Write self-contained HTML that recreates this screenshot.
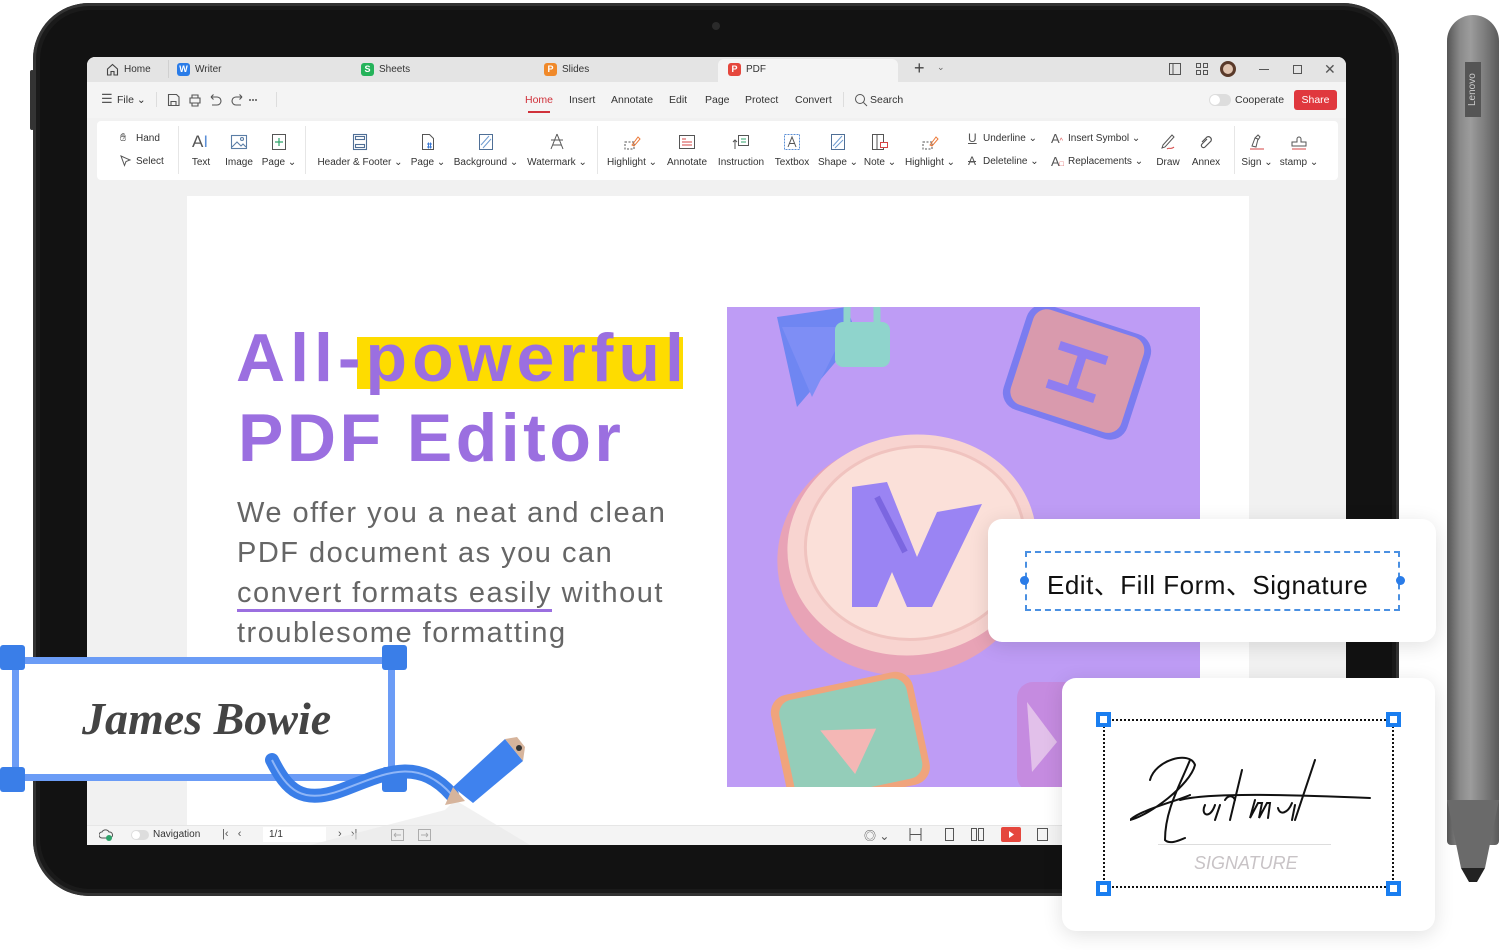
<!DOCTYPE html>
<html><head><meta charset="utf-8"><style>
*{margin:0;padding:0;box-sizing:border-box}
body{width:1500px;height:950px;background:#fff;position:relative;overflow:hidden;font-family:"Liberation Sans","Noto Sans CJK SC",sans-serif}
.abs{position:absolute}
.t{position:absolute;font-size:10px;color:#333;white-space:nowrap}
.lab{position:absolute;font-size:10px;color:#333;white-space:nowrap;transform:translateX(-50%);top:157px}
.ic{position:absolute;top:133px;width:18px;height:18px;transform:translateX(-50%)}
.m{position:absolute;top:94px;font-size:10.5px;color:#333}
</style></head><body>

<!-- tablet -->
<div class="abs" style="left:33px;top:3px;width:1366px;height:893px;border-radius:56px;background:#1a1a1a;box-shadow:inset 0 0 0 3px #333"></div>
<div class="abs" style="left:40px;top:10px;width:1352px;height:879px;border-radius:50px;background:#121212"></div>
<div class="abs" style="left:712px;top:22px;width:8px;height:8px;border-radius:50%;background:#2a2a2a"></div>
<div class="abs" style="left:30px;top:70px;width:4px;height:60px;background:#333;border-radius:2px"></div>

<!-- screen -->
<div class="abs" style="left:87px;top:57px;width:1259px;height:788px;background:#f1f1f1;border-radius:8px 8px 0 0;overflow:hidden">
  <div class="abs" style="left:0;top:0;width:1259px;height:25px;background:#e4e4e4"></div>
  <div class="abs" style="left:631px;top:2px;width:180px;height:23px;background:#f4f4f4;border-radius:6px 6px 0 0"></div>
  <div class="abs" style="left:0;top:25px;width:1259px;height:36px;background:#f4f4f4"></div>
  <div class="abs" style="left:10px;top:64px;width:1241px;height:59px;background:#fff;border-radius:4px"></div>
  <div class="abs" style="left:100px;top:139px;width:1062px;height:640px;background:#fff"></div>
  <div class="abs" style="left:0;top:768px;width:1259px;height:20px;background:#f4f4f4;border-top:1px solid #e6e6e6"></div>
</div>

<!-- tabs -->
<svg class="abs" style="left:106px;top:63px" width="13" height="13" viewBox="0 0 13 13"><path d="M1.5 6 6.5 1.5 11.5 6V12H8V8.5H5V12H1.5Z" fill="none" stroke="#444" stroke-width="1.1"/></svg>
<div class="t" style="left:124px;top:64px">Home</div>
<div class="abs" style="left:168px;top:60px;width:1px;height:18px;background:#d0d0d0"></div>
<div class="abs" style="left:177px;top:63px;width:13px;height:13px;background:#2a7ce8;border-radius:3px;color:#fff;font-size:9px;font-weight:bold;text-align:center;line-height:13px">W</div>
<div class="t" style="left:195px;top:64px">Writer</div>
<div class="abs" style="left:361px;top:63px;width:13px;height:13px;background:#25b35a;border-radius:3px;color:#fff;font-size:9px;font-weight:bold;text-align:center;line-height:13px">S</div>
<div class="t" style="left:379px;top:64px">Sheets</div>
<div class="abs" style="left:544px;top:63px;width:13px;height:13px;background:#f0892a;border-radius:3px;color:#fff;font-size:9px;font-weight:bold;text-align:center;line-height:13px">P</div>
<div class="t" style="left:562px;top:64px">Slides</div>
<div class="abs" style="left:728px;top:63px;width:13px;height:13px;background:#e5473d;border-radius:3px;color:#fff;font-size:9px;font-weight:bold;text-align:center;line-height:13px">P</div>
<div class="t" style="left:746px;top:64px">PDF</div>
<div class="t" style="left:914px;top:58px;font-size:18px;color:#444">+</div>
<div class="t" style="left:937px;top:62px;font-size:9px;color:#666">⌄</div>
<svg class="abs" style="left:1168px;top:62px" width="14" height="14"><rect x="1.5" y="1.5" width="11" height="11" fill="none" stroke="#555"/><line x1="5" y1="2" x2="5" y2="12" stroke="#555"/></svg>
<svg class="abs" style="left:1195px;top:62px" width="14" height="14"><g fill="none" stroke="#555"><rect x="1.5" y="1.5" width="4" height="4"/><rect x="8.5" y="1.5" width="4" height="4"/><rect x="1.5" y="8.5" width="4" height="4"/><rect x="8.5" y="8.5" width="4" height="4"/></g></svg>
<div class="abs" style="left:1220px;top:61px;width:16px;height:16px;border-radius:50%;background:#e0c4b0;border:3px solid #5a3a2a"></div>
<div class="abs" style="left:1259px;top:69px;width:10px;height:1px;background:#555"></div>
<div class="abs" style="left:1293px;top:65px;width:9px;height:9px;border:1px solid #555"></div>
<div class="t" style="left:1324px;top:61px;font-size:14px;color:#555">✕</div>

<!-- menu row -->
<div class="m" style="left:101px;font-size:13px;top:91px;color:#555">☰</div>
<div class="m" style="left:117px">File ⌄</div>
<div class="abs" style="left:156px;top:92px;width:1px;height:15px;background:#ddd"></div>
<svg class="abs" style="left:167px;top:93px" width="90" height="14"><g fill="none" stroke="#555" stroke-width="1.1"><path d="M1.5 1.5h8l2.5 2.5v8.5h-10.5z M4 12.5v-4h5v4"/><path d="M23 5h10v5h-10z M25 5V2h6v3 M25 10v3h6v-3"/><path d="M44 4h6a4 4 0 010 8h-5 M44 4l2.5-2.5 M44 4l2.5 2.5"/><path d="M75 4h-6a4 4 0 000 8h5 M75 4l-2.5-2.5 M75 4l-2.5 2.5"/></g><g fill="#555"><circle cx="86" cy="7" r="1"/><circle cx="89" cy="7" r="1"/><circle cx="83" cy="7" r="1"/></g></svg>
<div class="abs" style="left:276px;top:92px;width:1px;height:15px;background:#ddd"></div>
<div class="m" style="left:525px;color:#d0313a">Home</div>
<div class="abs" style="left:528px;top:111px;width:22px;height:2px;background:#d0313a"></div>
<div class="m" style="left:569px">Insert</div>
<div class="m" style="left:611px">Annotate</div>
<div class="m" style="left:669px">Edit</div>
<div class="m" style="left:705px">Page</div>
<div class="m" style="left:745px">Protect</div>
<div class="m" style="left:795px">Convert</div>
<div class="abs" style="left:843px;top:92px;width:1px;height:15px;background:#ddd"></div>
<svg class="abs" style="left:854px;top:93px" width="14" height="14"><circle cx="6" cy="6" r="4.5" fill="none" stroke="#555"/><line x1="9.5" y1="9.5" x2="13" y2="13" stroke="#555"/></svg>
<div class="m" style="left:870px">Search</div>
<div class="abs" style="left:1209px;top:94px;width:22px;height:12px;border-radius:6px;background:#ddd"></div>
<div class="abs" style="left:1210px;top:95px;width:10px;height:10px;border-radius:50%;background:#fff"></div>
<div class="m" style="left:1235px">Cooperate</div>
<div class="abs" style="left:1294px;top:90px;width:43px;height:20px;background:#e0383e;border-radius:3px;color:#fff;font-size:10.5px;text-align:center;line-height:20px">Share</div>

<!-- ribbon -->
<div class="t" style="left:120px;top:132px;font-size:11px">✋︎</div>
<div class="t" style="left:136px;top:133px">Hand</div>
<svg class="abs" style="left:120px;top:155px" width="12" height="12"><path d="M1 1l9 4-4 1.5L4.5 10.5z" fill="none" stroke="#555"/></svg>
<div class="t" style="left:136px;top:156px">Select</div>
<div class="abs" style="left:178px;top:126px;width:1px;height:48px;background:#e6e6e6"></div>
<div class="abs" style="left:305px;top:126px;width:1px;height:48px;background:#e6e6e6"></div>
<div class="abs" style="left:597px;top:126px;width:1px;height:48px;background:#e6e6e6"></div>
<div class="abs" style="left:1234px;top:126px;width:1px;height:48px;background:#e6e6e6"></div>

<div class="t" style="left:192px;top:132px;font-size:17px;color:#555">A<span style="color:#5b8fd6">I</span></div>
<svg class="ic" style="left:239px" viewBox="0 0 18 18"><g fill="none" stroke="#5b7ea6" stroke-width="1.1"><rect x="1.5" y="2.5" width="15" height="13"/><path d="M2 14l5-5 4 4 2-2 3 3"/><circle cx="12" cy="6" r="1.5"/></g></svg>
<svg class="ic" style="left:279px" viewBox="0 0 18 18"><rect x="2.5" y="1.5" width="13" height="15" fill="none" stroke="#555"/><path d="M9 5v8M5 9h8" stroke="#2fa36b" stroke-width="1.2"/></svg>
<svg class="ic" style="left:360px" viewBox="0 0 18 18"><g fill="none" stroke="#4f6f96" stroke-width="1.1"><rect x="2.5" y="1.5" width="13" height="15"/><rect x="4.5" y="3.5" width="9" height="3"/><rect x="4.5" y="11.5" width="9" height="3"/></g></svg>
<svg class="ic" style="left:428px" viewBox="0 0 18 18"><path d="M3.5 1.5h7l4 4v11h-11z" fill="none" stroke="#555"/><path d="M8 11h5M8 14h5M9.5 9.5v6M11.5 9.5v6" stroke="#3a78d4"/></svg>
<svg class="ic" style="left:486px" viewBox="0 0 18 18"><rect x="2.5" y="1.5" width="13" height="15" fill="none" stroke="#4f6f96"/><path d="M4 12l8-9M6 15l8-9" stroke="#6e9bd0"/></svg>
<svg class="ic" style="left:557px" viewBox="0 0 18 18"><path d="M9 1L3 16M9 1l6 15M3 7h12M5 12h8" fill="none" stroke="#555"/></svg>
<svg class="ic" style="left:632px" viewBox="0 0 18 18"><rect x="2" y="9" width="9" height="7" fill="none" stroke="#555" stroke-dasharray="2 1.5"/><path d="M9 12l6-8 2 2-6 7z" fill="none" stroke="#ec7a3a"/></svg>
<svg class="ic" style="left:687px" viewBox="0 0 18 18"><rect x="1.5" y="2.5" width="15" height="13" fill="none" stroke="#555"/><path d="M4 6h4M4 9h10M4 12h10" stroke="#d64545"/></svg>
<svg class="ic" style="left:741px" viewBox="0 0 18 18"><rect x="6.5" y="2.5" width="10" height="10" fill="none" stroke="#555"/><path d="M9 6h5M9 9h5" stroke="#2fa36b"/><path d="M3 16V7M1 9l2-2 2 2" fill="none" stroke="#555"/></svg>
<svg class="ic" style="left:792px" viewBox="0 0 18 18"><rect x="1.5" y="1.5" width="15" height="15" fill="none" stroke="#5b8fd6" stroke-dasharray="2 1"/><path d="M5 14L9 4l4 10M6.5 10.5h5" fill="none" stroke="#555"/></svg>
<svg class="ic" style="left:838px" viewBox="0 0 18 18"><rect x="2.5" y="1.5" width="13" height="15" fill="none" stroke="#4f6f96"/><path d="M4 13l9-10M6 15l8-8" stroke="#6e9bd0"/></svg>
<svg class="ic" style="left:880px" viewBox="0 0 18 18"><rect x="1.5" y="1.5" width="11" height="15" fill="none" stroke="#555"/><line x1="6" y1="2" x2="6" y2="16" stroke="#555"/><rect x="9.5" y="9.5" width="7" height="5" fill="#fff" stroke="#d64545"/></svg>
<svg class="ic" style="left:930px" viewBox="0 0 18 18"><rect x="2" y="9" width="9" height="7" fill="none" stroke="#555" stroke-dasharray="2 1.5"/><path d="M9 12l6-8 2 2-6 7z" fill="none" stroke="#ec7a3a"/></svg>
<div class="t" style="left:968px;top:131px;font-size:12px;text-decoration:underline;color:#555">U</div>
<div class="t" style="left:983px;top:133px">Underline ⌄</div>
<div class="t" style="left:968px;top:154px;font-size:12px;text-decoration:line-through;color:#555">A</div>
<div class="t" style="left:983px;top:156px">Deleteline ⌄</div>
<div class="t" style="left:1051px;top:131px;font-size:13px;color:#555">A<span style="font-size:7px;color:#d64545">^</span></div>
<div class="t" style="left:1068px;top:133px">Insert Symbol ⌄</div>
<div class="t" style="left:1051px;top:154px;font-size:13px;color:#555">A<span style="font-size:7px;color:#d64545">□</span></div>
<div class="t" style="left:1068px;top:156px">Replacements ⌄</div>
<svg class="ic" style="left:1168px" viewBox="0 0 18 18"><path d="M4 12L13 2l2 2-9 10-3 1z" fill="none" stroke="#555"/><path d="M8 16c2-2 4 1 7-2" fill="none" stroke="#d64545"/></svg>
<svg class="ic" style="left:1206px" viewBox="0 0 18 18"><path d="M5 9l5-5a3 3 0 014 4l-6 6a2 2 0 01-3-3l5-5" fill="none" stroke="#555" stroke-width="1.2"/></svg>
<svg class="ic" style="left:1257px" viewBox="0 0 18 18"><path d="M4 13l3-8 3 1-2 8zM7 5l3-3 2 2-2 3" fill="none" stroke="#555"/><line x1="2" y1="16" x2="16" y2="16" stroke="#d64545"/></svg>
<svg class="ic" style="left:1299px" viewBox="0 0 18 18"><path d="M7 9V6a2 2 0 114 0v3h5v4H2V9z" fill="none" stroke="#555"/><line x1="2" y1="16" x2="16" y2="16" stroke="#d64545"/></svg>
<div class="lab" style="left:201px">Text</div>
<div class="lab" style="left:239px">Image</div>
<div class="lab" style="left:279px">Page ⌄</div>
<div class="lab" style="left:360px">Header &amp; Footer ⌄</div>
<div class="lab" style="left:428px">Page ⌄</div>
<div class="lab" style="left:486px">Background ⌄</div>
<div class="lab" style="left:557px">Watermark ⌄</div>
<div class="lab" style="left:632px">Highlight ⌄</div>
<div class="lab" style="left:687px">Annotate</div>
<div class="lab" style="left:741px">Instruction</div>
<div class="lab" style="left:792px">Textbox</div>
<div class="lab" style="left:838px">Shape ⌄</div>
<div class="lab" style="left:880px">Note ⌄</div>
<div class="lab" style="left:930px">Highlight ⌄</div>
<div class="lab" style="left:1168px">Draw</div>
<div class="lab" style="left:1206px">Annex</div>
<div class="lab" style="left:1257px">Sign ⌄</div>
<div class="lab" style="left:1299px">stamp ⌄</div>

<!-- page content -->
<div class="abs" style="left:357px;top:337px;width:326px;height:52px;background:#fedc00"></div>
<div class="abs" style="left:236px;top:318px;font-size:68px;font-weight:bold;color:#9b6fe0;letter-spacing:5px;line-height:80px;white-space:nowrap">All-powerful</div>
<div class="abs" style="left:238px;top:398px;font-size:68px;font-weight:bold;color:#9b6fe0;letter-spacing:3.5px;line-height:80px;white-space:nowrap">PDF Editor</div>
<div class="abs" style="left:237px;top:493px;font-size:29px;color:#666;line-height:40px;white-space:nowrap;letter-spacing:1.5px">We offer you a neat and clean<br>PDF document as you can<br><span style="border-bottom:3px solid #9b6fe0">convert formats easily</span> without<br>troublesome formatting</div>

<!-- image -->
<svg class="abs" style="left:727px;top:307px" width="473" height="480" viewBox="0 0 473 480">
<rect width="473" height="480" fill="#be9cf5"/>
<path d="M50 10l70-10 10 30-60 70z" fill="#6f86f2"/><path d="M55 20l30 70 35-70z" fill="#7e8ef5"/>
<rect x="108" y="15" width="55" height="45" rx="8" fill="#8fd4cc"/><path d="M120 15v-12a15 15 0 0130 0v12" fill="none" stroke="#8fd4cc" stroke-width="7"/>
<g transform="rotate(18 350 65)"><rect x="285" y="10" width="130" height="110" rx="18" fill="#7b7cf0"/><rect x="292" y="14" width="116" height="100" rx="14" fill="#d99aad"/><path d="M325 45h50M350 45v40M325 85h50" stroke="#8f7df0" stroke-width="9"/></g>
<ellipse cx="180" cy="250" rx="130" ry="118" fill="#e8a3b6" transform="rotate(-10 180 250)"/>
<ellipse cx="185" cy="238" rx="125" ry="110" fill="#f8d4d0" transform="rotate(-10 185 238)"/>
<ellipse cx="188" cy="236" rx="110" ry="96" fill="#fbe0d9" stroke="#f0c3bf" stroke-width="3" transform="rotate(-10 188 236)"/>
<path d="M125 180l35 -5 30 75 20-45 45-8 -50 103h-25l-15-35-15 35h-25z" fill="#9a84f3"/>
<path d="M150 190l28 55" stroke="#7b66e0" stroke-width="6"/>
<g transform="rotate(-12 110 430)"><rect x="50" y="378" width="145" height="115" rx="18" fill="#f0a47c"/><rect x="58" y="384" width="130" height="102" rx="14" fill="#94cdb9"/><path d="M95 420l55 10-30 40z" fill="#f4b7b5"/></g>
<rect x="290" y="375" width="80" height="110" rx="16" fill="#c58be0"/><path d="M300 395l30 40-25 30z" fill="#e2c0ea"/>
</svg>

<!-- status bar -->
<svg class="abs" style="left:99px;top:828px" width="14" height="14"><path d="M3 10a3 3 0 010-6 4 4 0 017 0 3 3 0 011 6z" fill="none" stroke="#555"/><circle cx="10" cy="10" r="3" fill="#2fa36b"/></svg>
<div class="abs" style="left:131px;top:830px;width:18px;height:10px;border-radius:5px;background:#ddd"></div>
<div class="abs" style="left:132px;top:831px;width:8px;height:8px;border-radius:50%;background:#fff"></div>
<div class="t" style="left:153px;top:829px">Navigation</div>
<div class="t" style="left:222px;top:828px;font-size:11px;color:#555">|‹ &nbsp; ‹</div>
<div class="abs" style="left:263px;top:827px;width:63px;height:15px;background:#fff"></div>
<div class="t" style="left:269px;top:829px">1/1</div>
<div class="t" style="left:338px;top:828px;font-size:11px;color:#555">› &nbsp; ›|</div>
<svg class="abs" style="left:390px;top:828px" width="45" height="14"><g fill="none" stroke="#555"><rect x="1.5" y="1.5" width="12" height="11"/><path d="M4 7h7M4 7l2-2M4 7l2 2"/><rect x="28.5" y="1.5" width="12" height="11"/><path d="M31 7h7M38 7l-2-2M38 7l-2 2"/></g></svg>
<div class="t" style="left:864px;top:827px;font-size:12px;color:#555">◎ ⌄</div>
<svg class="abs" style="left:908px;top:827px" width="140" height="15"><g fill="none" stroke="#555"><path d="M2 1v13M13 1v13M2 7.5h11"/><rect x="37.5" y="1.5" width="8" height="12"/><rect x="63.5" y="1.5" width="5" height="12"/><rect x="70.5" y="1.5" width="5" height="12"/><rect x="129.5" y="1.5" width="10" height="12"/></g><rect x="93" y="0" width="20" height="15" rx="2" fill="#e5473d"/><path d="M101 4l5 3.5-5 3.5z" fill="#fff"/></svg>

<!-- James Bowie box -->
<div class="abs" style="left:12px;top:657px;width:383px;height:124px;background:#fff;border:7px solid #6b9cf6"></div>
<div class="abs" style="left:0;top:645px;width:25px;height:25px;background:#3a7ee8;border-radius:3px"></div>
<div class="abs" style="left:382px;top:645px;width:25px;height:25px;background:#3a7ee8;border-radius:3px"></div>
<div class="abs" style="left:0;top:767px;width:25px;height:25px;background:#3a7ee8;border-radius:3px"></div>
<div class="abs" style="left:382px;top:767px;width:25px;height:25px;background:#3a7ee8;border-radius:3px"></div>
<div class="abs" style="left:82px;top:692px;font-size:46px;font-style:italic;font-weight:bold;font-family:'Liberation Serif',serif;color:#444">James Bowie</div>
<svg class="abs" style="left:240px;top:730px" width="300" height="120" viewBox="0 0 300 120">
<polygon points="205,80 215,70 290,115 70,115" fill="#e8e8e8" opacity="0.6"/>
<path d="M32 30c15 30 30 45 70 30s75-35 110 5" fill="none" stroke="#3a7ee8" stroke-width="14" stroke-linecap="round"/>
<path d="M32 30c15 30 30 45 70 30s75-35 110 5" fill="none" stroke="#8fb6f7" stroke-width="2"/>
<path d="M213 57l52-48 18 22-50 42z" fill="#3f82ee"/>
<path d="M265 9l12-2 8 10-2 14z" fill="#d6b49c"/>
<circle cx="279" cy="18" r="3" fill="#333"/>
<path d="M213 57l-8 18 20-4z" fill="#d6b49c"/>
</svg>

<!-- Edit card -->
<div class="abs" style="left:988px;top:519px;width:448px;height:123px;background:#fff;border-radius:14px;box-shadow:0 4px 20px rgba(0,0,0,0.12)"></div>
<div class="abs" style="left:1025px;top:551px;width:375px;height:60px;border:2px dashed #4a90e2"></div>
<div class="abs" style="left:1020px;top:576px;width:9px;height:9px;border-radius:50%;background:#2a7ce8"></div>
<div class="abs" style="left:1396px;top:576px;width:9px;height:9px;border-radius:50%;background:#2a7ce8"></div>
<div class="abs" style="left:1047px;top:565px;font-size:26px;color:#111;white-space:nowrap;letter-spacing:0.5px">Edit、Fill Form、Signature</div>

<!-- Signature card -->
<div class="abs" style="left:1062px;top:678px;width:373px;height:253px;background:#fff;border-radius:14px;box-shadow:0 4px 20px rgba(0,0,0,0.12)"></div>
<div class="abs" style="left:1103px;top:719px;width:291px;height:169px;border:2.5px dotted #111"></div>
<div class="abs" style="left:1096px;top:712px;width:15px;height:15px;background:#fff;border:4px solid #1a7ef0"></div>
<div class="abs" style="left:1386px;top:712px;width:15px;height:15px;background:#fff;border:4px solid #1a7ef0"></div>
<div class="abs" style="left:1096px;top:881px;width:15px;height:15px;background:#fff;border:4px solid #1a7ef0"></div>
<div class="abs" style="left:1386px;top:881px;width:15px;height:15px;background:#fff;border:4px solid #1a7ef0"></div>
<div class="abs" style="left:1158px;top:844px;width:173px;height:1px;background:#ddd"></div>
<div class="abs" style="left:1194px;top:853px;font-size:18px;font-style:italic;color:#c8c3c6">SIGNATURE</div>
<svg class="abs" style="left:1130px;top:750px" width="250" height="100" viewBox="0 0 250 100"><g fill="none" stroke="#111" stroke-width="2" stroke-linecap="round">
<path d="M20 30c5-20 40-30 45-15-5 20-45 50-65 55 10-10 50-20 60-25"/>
<path d="M60 10c-10 25-25 50-25 80 5 5 15 0 20-2"/>
<path d="M50 50c30-8 120-5 190-2"/>
<path d="M75 55c-5 10 5 15 10 0M90 55l-5 15M95 50c3-5 8-5 10 0M112 20l-12 50M125 50l-5 18 8-15 4 0-3 15 8-15 3 0-2 15M148 58c2 8 10 5 14-5M165 55l-3 15M185 10l-20 60"/>
</g></svg>

<!-- pen -->
<div class="abs" style="left:1447px;top:15px;width:52px;height:830px;border-radius:26px 26px 4px 4px;background:linear-gradient(90deg,#555 0%,#8a8a8a 25%,#9c9c9c 45%,#7a7a7a 75%,#5a5a5a 100%)"></div>
<div class="abs" style="left:1465px;top:62px;width:16px;height:55px;background:#555"></div>
<div class="abs" style="left:1466px;top:64px;width:14px;height:51px;color:#ccc;font-size:10px;writing-mode:vertical-rl;transform:rotate(180deg);text-align:center;line-height:14px">Lenovo</div>
<svg class="abs" style="left:1447px;top:800px" width="53" height="90"><path d="M0 0h52l-14 68h-24z" fill="#6a6a6a"/><path d="M14 68h24l-8 14h-8z" fill="#222"/></svg>

</body></html>
